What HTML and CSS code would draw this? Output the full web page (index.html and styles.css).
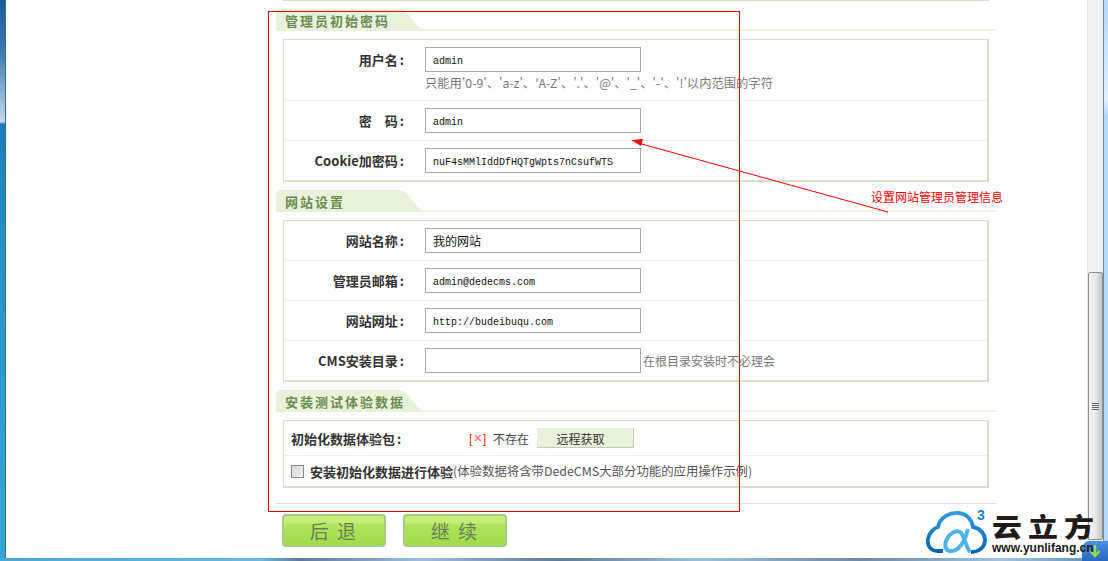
FILE: index.html
```html
<!DOCTYPE html>
<html lang="zh">
<head>
<meta charset="utf-8">
<title>安装</title>
<link rel="stylesheet" href="styles.css">
</head>
<body>
<div class="window">
  <div class="frame">
    <div class="edge-left"></div>
    <main class="content">
      <div class="column">
        <div class="prev-box"></div>

        <h2 class="tab"><span class="tab-label">管理员初始密码</span></h2>
        <section class="box">
          <div class="row row-tall">
            <label class="lab">用户名<span class="colon">:</span></label>
            <div class="field">
              <input class="txt" value="admin">
              <p class="hint">只能用'0-9'、'a-z'、'A-Z'、'.'、'@'、'_'、'-'、'!'以内范围的字符</p>
            </div>
          </div>
          <div class="row">
            <label class="lab">密&emsp;码<span class="colon">:</span></label>
            <div class="field"><input class="txt" value="admin"></div>
          </div>
          <div class="row">
            <label class="lab">Cookie加密码<span class="colon">:</span></label>
            <div class="field"><input class="txt" value="nuF4sMMlIddDfHQTgWpts7nCsufWTS"></div>
          </div>
        </section>

        <h2 class="tab"><span class="tab-label">网站设置</span></h2>
        <section class="box">
          <div class="row">
            <label class="lab">网站名称<span class="colon">:</span></label>
            <div class="field"><input class="txt txt-cjk" value="我的网站"></div>
          </div>
          <div class="row">
            <label class="lab">管理员邮箱<span class="colon">:</span></label>
            <div class="field"><input class="txt" value="admin@dedecms.com"></div>
          </div>
          <div class="row">
            <label class="lab">网站网址<span class="colon">:</span></label>
            <div class="field"><input class="txt" value="http://budeibuqu.com"></div>
          </div>
          <div class="row">
            <label class="lab">CMS安装目录<span class="colon">:</span></label>
            <div class="field field-inline"><input class="txt" value=""><span class="note">在根目录安装时不必理会</span></div>
          </div>
        </section>

        <h2 class="tab"><span class="tab-label">安装测试体验数据</span></h2>
        <section class="box">
          <div class="row-pack">
            <strong class="pack-lab">初始化数据体验包<span class="colon">:</span></strong>
            <span class="status"><span class="bracket">[</span><span class="cross">×</span><span class="bracket">]</span></span>
            <span class="absent">不存在</span>
            <button class="fetch" type="button">远程获取</button>
          </div>
          <div class="row-check">
            <input class="chk" type="checkbox">
            <strong class="chk-lab">安装初始化数据进行体验</strong><span class="chk-note">(体验数据将含带DedeCMS大部分功能的应用操作示例)</span>
          </div>
        </section>

        <div class="actions">
          <button class="btn" type="button">后 退</button>
          <button class="btn" type="button">继 续</button>
        </div>
      </div>

      <div class="red-rect"></div>
      <svg class="arrow" width="270" height="80" viewBox="0 0 270 80">
        <line x1="257" y1="72" x2="7" y2="3" stroke="#f00" stroke-width="1"/>
        <polygon points="0,0 12,-1 10,6" fill="#f00"/>
      </svg>
      <div class="callout">设置网站管理员管理信息</div>
    </main>
    <div class="scrollbar">
      <div class="thumb"><span class="grip"></span></div>
    </div>
    <div class="edge-right"></div>
  </div>
  <div class="edge-bottom"></div>

  <div class="logo">
    <div class="tray">
      <svg width="14" height="14" viewBox="0 0 14 14"><path d="M7 1v10M2.500 7 7 12l4.500-5" fill="none" stroke="#8fe04a" stroke-width="2.500"/></svg>
    </div>
    <svg class="cloud" width="62" height="46" viewBox="0 0 62 46">
      <defs>
        <linearGradient id="cg" x1="0" y1="0" x2="0" y2="1">
          <stop offset="0" stop-color="#2f9be0"/>
          <stop offset="1" stop-color="#0b62b4"/>
        </linearGradient>
      </defs>
      <path d="M17 41 H12 C4 41 1 35 2 29 C3 23 8 18 12 17 C14 7 24 2 33 3 C41 4 46 10 47 17 C54 18 59 24 59 30 C59 37 53 42 45 42" fill="none" stroke="url(#cg)" stroke-width="3.800"/>
      <path d="M42 19 C38 34 32 41 25 41 C19 41 18 35 21 29 C24 23 30 20 34 22 C38 24 39 35 44 42" fill="none" stroke="#4fb2ea" stroke-width="4"/>
    </svg>
    <span class="logo-sup">3</span>
    <div class="logo-text">
      <div class="logo-cn">云立方</div>
      <div class="logo-url">www.yunlifang.cn</div>
    </div>
  </div>
</div>
</body>
</html>
```
FILE: styles.css
```css
* { box-sizing: border-box; }
html, body { margin: 0; padding: 0; height: 100%; overflow: hidden; background: #fff; }
body { font-family: "Noto Sans CJK SC", "Liberation Sans", sans-serif; font-size: 13px; color: #333; }

.window { position: relative; width: 1108px; height: 561px; display: flex; flex-direction: column; }
.frame { flex: 1; display: flex; min-height: 0; }

.edge-left { width: 6px; border-right: 1px solid #2f6f8f; background: linear-gradient(180deg, #1a5a9e 0, #3a78ae 50px, #c4d9ea 122px, #1c7dbb 124px, #2a96cc 300px, #35a4d6 100%); }
.edge-right { width: 5px; border-left: 1px solid #7a8a9a; background: linear-gradient(180deg, #b4d8f8 0, #e0effc 100px, #b4d8f8 115px, #b4d8f8 100%); }
.edge-bottom { height: 3px; background: linear-gradient(90deg, #48a6d8 0, #6ab8e0 260px, #5c7c98 300px, #9cc0dc 420px, #5c7c98 560px, #9cc0dc 700px, #6a8aa8 860px, #a0c4e0 1000px, #5a8ab8 100%); }

.content { flex: 1; position: relative; background: #fff; padding-left: 270px; min-width: 0; overflow: hidden; }
.column { width: 720px; }

.prev-box { margin: 0 7px; height: 1px; background: #d5dfcc; }

.tab { position: relative; margin: 8px 0 0; height: 22px; border-bottom: 2px solid #eef3e0; font-size: 13px; font-weight: bold; }
.tab + .box { margin-top: 8px; }
.tab::before { content: ""; position: absolute; left: 0; top: 0; width: 152px; height: 22px; background: #e8f1dc; clip-path: path("M6 0 H124 C134 0 138 21 152 22 H6 C2 22 0 20 0 16 V6 C0 2 2 0 6 0 Z"); }
.tab-label { position: relative; display: block; padding-left: 9px; line-height: 23px; color: #6d8c4e; letter-spacing: 2px; white-space: nowrap; }

.box { margin: 0 7px; width: 706px; border: 1px solid #d5dfcc; border-width: 1px 2px 2px 1px; }
.box + .tab { margin-top: 8px; }

.row { display: flex; height: 40px; border-bottom: 1px solid #f0f0f0; align-items: center; }
.row:last-child { border-bottom: 0; height: 39px; }
.row-tall { height: 61px; align-items: flex-start; padding-top: 7px; }
.row-tall .lab { line-height: 25px; }
.lab { width: 120px; text-align: right; font-weight: bold; font-size: 13px; color: #333; flex: none; white-space: nowrap; }
.colon { padding-left: 2px; }
.field { margin-left: 21px; }
.field-inline { display: flex; align-items: center; }

.txt { display: block; width: 216px; height: 25px; padding: 3px 7px 0; border: 1px solid #a9a9a9; background: #fff; outline: 0; font-family: "Liberation Mono", monospace; font-size: 10px; color: #111; border-radius: 0; }
.txt-cjk { font-family: "Noto Sans CJK SC", sans-serif; font-size: 12px; padding-top: 0; }
.hint { margin: 0; line-height: 22px; font-size: 12.300px; color: #777; white-space: nowrap; }
.note { margin-left: 2px; font-size: 12px; color: #777; white-space: nowrap; }

.row-pack { display: flex; align-items: center; height: 35px; padding-left: 7px; border-bottom: 1px solid #f0f0f0; white-space: nowrap; }
.pack-lab { width: 178px; font-size: 13px; color: #333; flex: none; }
.status { width: 24px; flex: none; font: 13px "Liberation Sans", sans-serif; }
.bracket { color: #e04020; }
.cross { color: #f05050; padding: 0 1px; font-size: 14px; }
.absent { font-size: 12px; color: #444; width: 44px; flex: none; }
.fetch { width: 97px; height: 20px; padding: 1px 9px 0 0; margin: 0; border: 0; border-right: 1px solid #c4ccb8; border-bottom: 1px solid #c4ccb8; background: #e8f1dc; font-family: inherit; font-size: 12px; color: #333; }

.row-check { display: flex; align-items: center; height: 30px; padding-left: 7px; white-space: nowrap; }
.chk { appearance: none; width: 13px; height: 13px; margin: 0 6px 0 0; border: 1px solid #8a8a8a; background: linear-gradient(135deg, #d4d4d4, #f4f4f4); flex: none; }
.chk-lab { font-size: 13px; color: #333; }
.chk-note { font-size: 12.400px; color: #555; }

.actions { margin-top: 15px; border-top: 1px solid #dcdcdc; padding: 10px 0 0 6px; display: flex; gap: 17px; }
.btn { width: 104px; height: 33px; padding: 0; border: 2px solid #a9cc84; border-radius: 4px; background: linear-gradient(180deg, #c8ee78 0, #c4ec74 7px, #b2e45e 8px, #a0dc48 100%); font-family: inherit; font-size: 19px; letter-spacing: 2px; color: #6d8058; }

.red-rect { position: absolute; left: 262px; top: 11px; width: 472px; height: 501px; border: 1px solid #e00000; pointer-events: none; }
.arrow { position: absolute; left: 625px; top: 140px; overflow: visible; }
.callout { position: absolute; left: 865px; top: 188px; font-size: 12px; line-height: 18px; color: #f00; white-space: nowrap; }

.scrollbar { width: 16px; background: #f0f0f0; border-left: 1px solid #e4e4e4; padding-top: 272px; }
.thumb { height: 268px; display: flex; align-items: center; justify-content: center; border: 1px solid #8e8e8e; border-radius: 2px; background: linear-gradient(90deg, #f4f4f4 0, #e8e8e8 50%, #c4c4c4 100%); }
.grip { width: 7px; height: 7px; background: repeating-linear-gradient(180deg, #666 0, #666 1px, #e8e8e8 1px, #e8e8e8 2px); }

.logo { position: absolute; right: 0; bottom: 0; width: 182px; height: 51px; }
.cloud { position: absolute; left: 0; top: 0; }
.logo-sup { position: absolute; left: 51px; top: -2px; font: bold 14px/14px "Liberation Sans", sans-serif; color: #1a80d0; }
.logo-text { position: absolute; left: 66px; top: 0; color: #221a18; white-space: nowrap; }
.logo-cn { font-size: 26px; font-weight: 900; line-height: 28px; letter-spacing: 5.300px; margin-top: 2px; transform: scaleX(1.150); transform-origin: left center; }
.logo-url { font: bold 12px/14px "Liberation Sans", sans-serif; margin-top: 1px; }
.tray { position: absolute; right: 0; bottom: 0; width: 26px; height: 20px; border-radius: 8px 0 0 0; background: linear-gradient(180deg, #4a90e0, #2a68c0); display: flex; align-items: center; justify-content: center; }
```
